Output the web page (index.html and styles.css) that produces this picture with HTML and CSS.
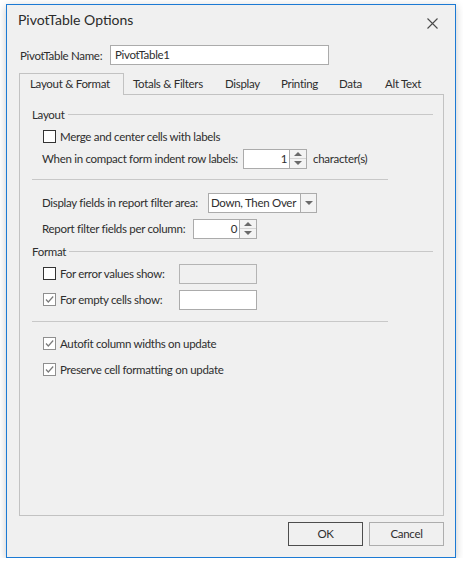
FILE: index.html
```html
<!DOCTYPE html>
<html>
<head>
<meta charset="utf-8">
<title>PivotTable Options</title>
<link rel="stylesheet" href="styles.css">
</head>
<body>
<div class="dialog">
  <div class="titlebar">
    <span class="title">PivotTable Options</span>
    <svg class="close" width="11" height="11" viewBox="0 0 11 11"><path d="M0.5 0.5L10.5 10.5M10.5 0.5L0.5 10.5" stroke="#4a4a4a" stroke-width="1.1" fill="none"/></svg>
  </div>

  <div class="name-row">
    <span class="label">PivotTable Name:</span>
    <div class="textbox name-input">PivotTable1</div>
  </div>

  <div class="tabs">
    <div class="tab active">Layout &amp; Format</div>
    <div class="tab">Totals &amp; Filters</div>
    <div class="tab">Display</div>
    <div class="tab">Printing</div>
    <div class="tab">Data</div>
    <div class="tab">Alt Text</div>
  </div>

  <div class="panel">
    <div class="row group-head"><span>Layout</span><div class="head-line"></div></div>

    <div class="row opt">
      <span class="check"></span><span>Merge and center cells with labels</span>
    </div>

    <div class="row field">
      <span class="field-label indent-label">When in compact form indent row labels:</span>
      <div class="spin"><span class="spin-val">1</span>
        <div class="spin-btns">
          <span class="spin-half"><span class="arrow up"></span></span><span class="spin-half"><span class="arrow down"></span></span>
        </div>
      </div>
      <span class="suffix">character(s)</span>
    </div>

    <div class="row sep tight"><div class="sep-line"></div></div>

    <div class="row field loose">
      <span class="field-label area-label">Display fields in report filter area:</span>
      <div class="combo"><span class="combo-val">Down, Then Over</span>
        <div class="combo-btn"><span class="arrow down"></span></div>
      </div>
    </div>

    <div class="row field spaced">
      <span class="field-label count-label">Report filter fields per column:</span>
      <div class="spin"><span class="spin-val">0</span>
        <div class="spin-btns">
          <span class="spin-half"><span class="arrow up"></span></span><span class="spin-half"><span class="arrow down"></span></span>
        </div>
      </div>
    </div>

    <div class="row group-head loose"><span>Format</span><div class="head-line"></div></div>

    <div class="row opt">
      <span class="check"></span><span class="opt-label">For error values show:</span>
      <div class="textbox small-input disabled"></div>
    </div>

    <div class="row opt spaced">
      <span class="check checked"><svg width="11" height="11" viewBox="0 0 11 11"><path d="M2 5.5L4.3 8L9.2 2.5" stroke="#7a7a7a" stroke-width="1.2" fill="none"/></svg></span><span class="opt-label">For empty cells show:</span>
      <div class="textbox small-input"></div>
    </div>

    <div class="row sep"><div class="sep-line"></div></div>

    <div class="row opt">
      <span class="check checked"><svg width="11" height="11" viewBox="0 0 11 11"><path d="M2 5.5L4.3 8L9.2 2.5" stroke="#7a7a7a" stroke-width="1.2" fill="none"/></svg></span><span>Autofit column widths on update</span>
    </div>

    <div class="row opt spaced">
      <span class="check checked"><svg width="11" height="11" viewBox="0 0 11 11"><path d="M2 5.5L4.3 8L9.2 2.5" stroke="#7a7a7a" stroke-width="1.2" fill="none"/></svg></span><span>Preserve cell formatting on update</span>
    </div>
  </div>

  <div class="buttons">
    <div class="btn default">OK</div>
    <div class="btn">Cancel</div>
  </div>
</div>
</body>
</html>
```

FILE: styles.css
```css
* { box-sizing: border-box; }

html, body {
  margin: 0;
  padding: 0;
  background: #ffffff;
}

body {
  padding: 4px 0 0 6px;
  font-family: Lato, "Noto Sans", sans-serif;
  font-size: 11.5px;
  letter-spacing: -0.3px;
  color: #2e2e2e;
}

.dialog {
  width: 450px;
  height: 554px;
  background: #f0f0f0;
  border: 1px solid #1c7ad4;
  box-shadow: 0 2px 8px rgba(0, 0, 0, 0.22);
  display: flex;
  flex-direction: column;
}

.titlebar {
  height: 32px;
  display: flex;
  justify-content: space-between;
  align-items: flex-start;
  padding: 5px 17px 0 11px;
}

.title {
  font-size: 14px;
  letter-spacing: 0;
  line-height: 20px;
  color: #2b2b2b;
}

.close {
  margin-top: 8px;
  display: block;
}

.name-row {
  margin-top: 8px;
  height: 20px;
  display: flex;
  align-items: center;
  padding-left: 13px;
  white-space: nowrap;
}

.name-row .label {
  width: 90px;
  flex-shrink: 0;
}

.textbox {
  background: #ffffff;
  border: 1px solid #ababab;
  height: 20px;
  line-height: 18px;
  padding-left: 4px;
  flex-shrink: 0;
}

.name-input {
  width: 219px;
}

.tabs {
  margin-top: 8px;
  height: 21px;
  display: flex;
  padding-left: 12px;
  white-space: nowrap;
}

.tab {
  height: 21px;
  line-height: 21px;
  padding-left: 9px;
  flex-shrink: 0;
}

.tab:nth-child(2) { width: 92px; }
.tab:nth-child(3) { width: 56px; }
.tab:nth-child(4) { width: 58px; }
.tab:nth-child(5) { width: 46px; }

.tab.active {
  position: relative;
  z-index: 1;
  width: 105px;
  height: 22px;
  border: 1px solid #c2c2c2;
  border-bottom: none;
  background: #f0f0f0;
  line-height: 20px;
  padding-left: 10px;
}

.panel {
  margin-left: 12px;
  width: 425px;
  height: 422px;
  border: 1px solid #c2c2c2;
  padding: 9px 10px 0 12px;
}

.row {
  height: 21px;
  display: flex;
  align-items: center;
  margin-top: 1px;
  white-space: nowrap;
}

.row:first-child { margin-top: 0; }
.row.tight { margin-top: 0; }
.row.loose { margin-top: 2px; }
.row.spaced { margin-top: 5px; }

.group-head .head-line {
  flex: 1;
  height: 1px;
  background: #c8c8c8;
  margin-left: 3px;
}

.sep .sep-line {
  width: 356px;
  height: 1px;
  background: #c8c8c8;
}

.opt {
  padding-left: 11px;
}

.field {
  padding-left: 10px;
}

.field-label { flex-shrink: 0; }
.indent-label { width: 201px; }
.area-label { width: 166px; }
.count-label { width: 151px; }

.check {
  width: 13px;
  height: 13px;
  flex-shrink: 0;
  border: 1px solid #333333;
  background: #ffffff;
  margin-right: 4px;
  display: flex;
  align-items: center;
  justify-content: center;
}

.check.checked {
  border-color: #8f8f8f;
}

.check svg { display: block; }

.spin {
  width: 64px;
  height: 20px;
  flex-shrink: 0;
  background: #ffffff;
  border: 1px solid #ababab;
  display: flex;
}

.spin-val {
  flex: 1;
  text-align: right;
  line-height: 18px;
  padding-right: 2px;
}

.spin-btns {
  width: 17px;
  border-left: 1px solid #ababab;
  display: flex;
  flex-direction: column;
  background: #f3f3f3;
}

.spin-half {
  flex: 1;
  display: flex;
  align-items: center;
  justify-content: center;
}

.spin-half + .spin-half {
  border-top: 1px solid #d4d4d4;
}

.arrow {
  width: 0;
  height: 0;
  border-left: 4px solid transparent;
  border-right: 4px solid transparent;
}

.arrow.up { border-bottom: 4px solid #6a6a6a; }
.arrow.down { border-top: 4px solid #6a6a6a; }

.suffix {
  margin-left: 6px;
}

.combo {
  width: 109px;
  height: 20px;
  flex-shrink: 0;
  background: #ffffff;
  border: 1px solid #ababab;
  display: flex;
}

.combo-val {
  flex: 1;
  line-height: 18px;
  padding-left: 2px;
  overflow: hidden;
}

.combo-btn {
  width: 16px;
  border-left: 1px solid #ababab;
  background: #f3f3f3;
  display: flex;
  align-items: center;
  justify-content: center;
}

.opt-label {
  width: 119px;
  flex-shrink: 0;
}

.small-input {
  width: 78px;
}

.small-input.disabled {
  background: #f0f0f0;
  border-color: #b4b4b4;
}

.buttons {
  margin-top: 6px;
  height: 24px;
  display: flex;
  justify-content: flex-end;
  gap: 6px;
  padding-right: 11px;
}

.btn {
  width: 75px;
  height: 24px;
  line-height: 22px;
  text-align: center;
  border: 1px solid #adadad;
  background: #f0f0f0;
}

.btn.default {
  border-color: #4d4d4d;
}
```
